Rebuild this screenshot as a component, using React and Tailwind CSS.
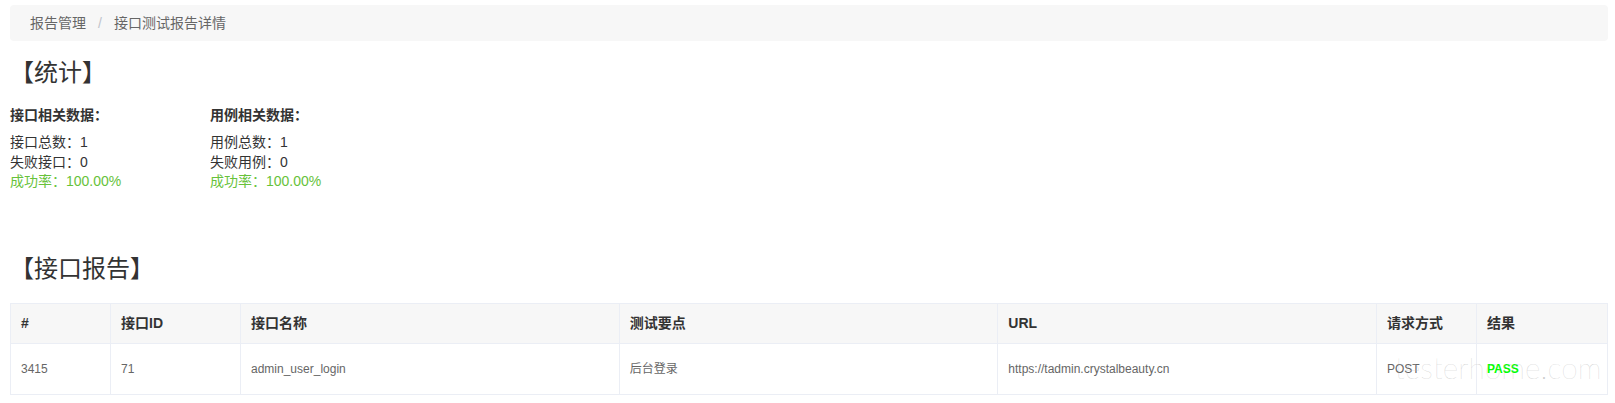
import React from "react";

const stats = [
  {
    title: "接口相关数据：",
    rows: [
      ["接口总数：", "1"],
      ["失败接口：", "0"],
    ],
  },
  {
    title: "用例相关数据：",
    rows: [
      ["用例总数：", "1"],
      ["失败用例：", "0"],
    ],
  },
];

export default function App() {
  return (
    <div className="relative pl-[10px] pr-[7px] pt-[5px] pb-[8px] font-['Liberation_Sans','Noto_Sans_CJK_SC',sans-serif] text-[14px] text-[#333] bg-white">
      <nav className="flex h-[36px] items-center rounded-[4px] bg-[#f7f7f7] px-[20px] text-[#666]">
        <span>报告管理</span>
        <span className="mx-[12px] text-[#c0c4cc]">/</span>
        <span>接口测试报告详情</span>
      </nav>

      <h3 className="mt-[19px] text-[24px] leading-[26px] font-normal">【统计】</h3>

      <div className="mt-[19px] flex">
        {stats.map((s) => (
          <div key={s.title} className="w-[200px]">
            <div className="font-bold leading-[20px]">{s.title}</div>
            <div className="mt-[8px] leading-[19.5px]">
              {s.rows.map(([k, v]) => (
                <div key={k}>
                  {k}
                  {v}
                </div>
              ))}
              <div className="text-[#67c23a]">成功率：100.00%</div>
            </div>
          </div>
        ))}
      </div>

      <h3 className="mt-[64px] text-[24px] leading-[26px] font-normal">【接口报告】</h3>

      <table className="mt-[21px] w-full table-fixed border-collapse border border-[#ebeef5]">
        <colgroup>
          <col className="w-[100px]" />
          <col className="w-[130px]" />
          <col />
          <col />
          <col />
          <col className="w-[100px]" />
          <col className="w-[131px]" />
        </colgroup>
        <thead>
          <tr className="bg-[#f7f7f7]">
            {["#", "接口ID", "接口名称", "测试要点", "URL", "请求方式", "结果"].map((h) => (
              <th
                key={h}
                className="border border-[#ebeef5] px-[10px] py-[10px] text-left text-[14px] leading-[19px] font-bold text-[#333]"
              >
                {h}
              </th>
            ))}
          </tr>
        </thead>
        <tbody>
          <tr className="text-[12px] text-[#666]">
            <td className="border border-[#ebeef5] px-[10px] py-[15px] leading-[20px]">3415</td>
            <td className="border border-[#ebeef5] px-[10px] py-[15px] leading-[20px]">71</td>
            <td className="border border-[#ebeef5] px-[10px] py-[15px] leading-[20px]">admin_user_login</td>
            <td className="border border-[#ebeef5] px-[10px] py-[15px] leading-[20px]">后台登录</td>
            <td className="border border-[#ebeef5] px-[10px] py-[15px] leading-[20px]">https://tadmin.crystalbeauty.cn</td>
            <td className="border border-[#ebeef5] px-[10px] py-[15px] leading-[20px]">POST</td>
            <td className="border border-[#ebeef5] px-[10px] py-[15px] leading-[20px] font-bold text-[#00ff00]">PASS</td>
          </tr>
        </tbody>
      </table>

      <div className="pointer-events-none absolute left-[1395px] top-[347px] whitespace-nowrap font-['Lato',sans-serif] text-[30px] font-thin leading-[40px] text-[#bdbdbd]/80">
        testerhome.com
      </div>
    </div>
  );
}
